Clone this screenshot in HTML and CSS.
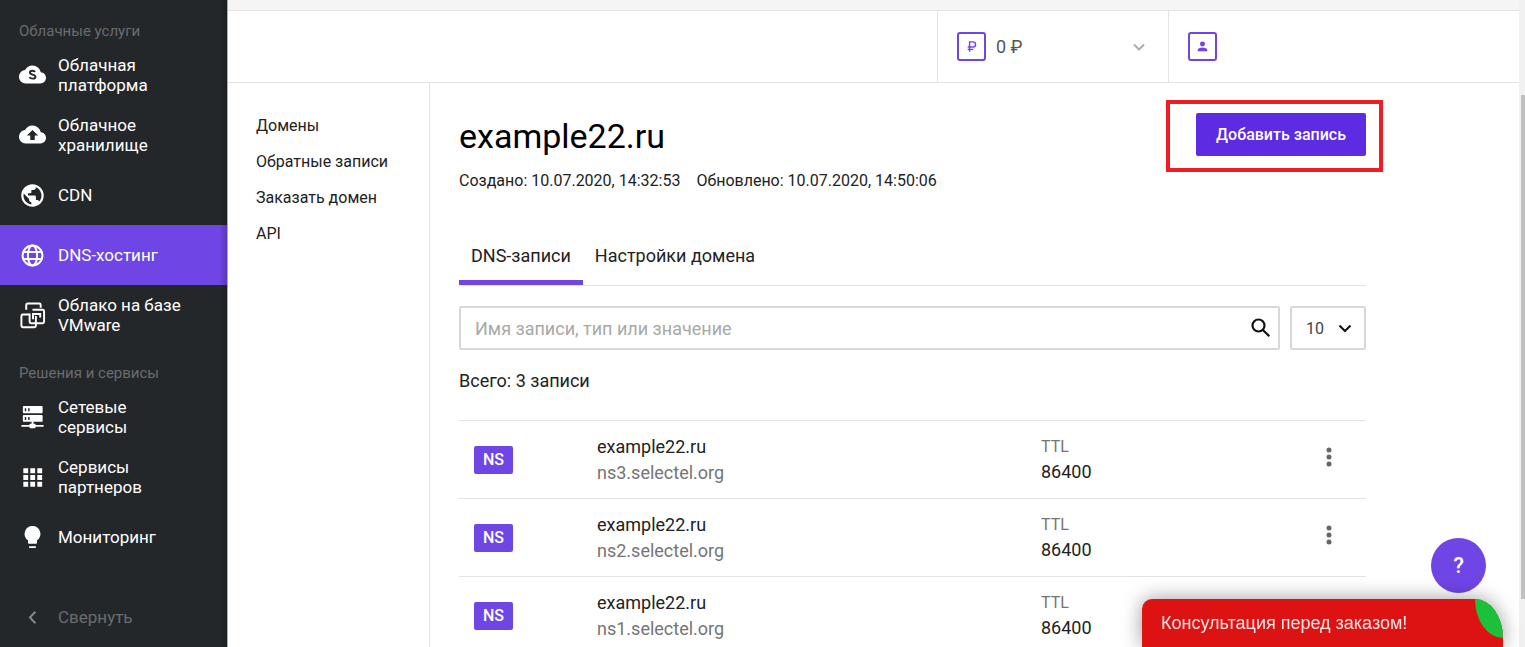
FILE: index.html
```html
<!DOCTYPE html>
<html lang="ru">
<head>
<meta charset="utf-8">
<title>example22.ru — DNS-хостинг</title>
<link rel="stylesheet" href="styles.css">
</head>
<body>
<div class="app">
  <nav class="sidebar" aria-label="Услуги">
    <h2 class="sidebar-title">Облачные услуги</h2>
    <a class="service" href="#">
      <svg class="service-icon" viewBox="0 1 24 24"><path fill="#fff" d="M19.350 10.040C18.670 6.590 15.640 4 12 4 9.110 4 6.600 5.640 5.350 8.040 2.340 8.360 0 10.910 0 14c0 3.310 2.690 6 6 6h13c2.760 0 5-2.240 5-5 0-2.640-2.050-4.780-4.650-4.960z"/><path fill="none" stroke="#24272a" stroke-width="1.700" d="M14.300 9.800c-.5-.7-1.300-1-2.300-1-1.400 0-2.300.7-2.300 1.600 0 2.400 4.900 1.200 4.900 3.700 0 1.100-1 1.700-2.500 1.700-1.300 0-2.300-.4-2.800-1.200"/></svg>
      <span>Облачная платформа</span>
    </a>
    <a class="service" href="#">
      <svg class="service-icon" viewBox="0 1 24 24"><path fill="#fff" d="M19.350 10.040C18.670 6.590 15.640 4 12 4 9.110 4 6.600 5.640 5.350 8.040 2.340 8.360 0 10.910 0 14c0 3.310 2.690 6 6 6h13c2.760 0 5-2.240 5-5 0-2.640-2.050-4.780-4.650-4.960z"/><path fill="#24272a" d="M14 13v4h-4v-4H7l5-5 5 5z"/></svg>
      <span>Облачное хранилище</span>
    </a>
    <a class="service" href="#">
      <svg class="service-icon" viewBox="0 0 24 24"><path fill="#fff" d="M12 2C6.480 2 2 6.480 2 12s4.480 10 10 10 10-4.480 10-10S17.520 2 12 2zm-1 17.930c-3.950-.49-7-3.850-7-7.930 0-.62.080-1.210.210-1.790L9 15v1c0 1.100.9 2 2 2v1.930zm6.900-2.540c-.26-.81-1-1.390-1.900-1.390h-1v-3c0-.55-.45-1-1-1H8v-2h2c.55 0 1-.45 1-1V7h2c1.100 0 2-.9 2-2v-.41c2.930 1.190 5 4.060 5 7.410 0 2.080-.8 3.970-2.100 5.390z"/></svg>
      <span>CDN</span>
    </a>
    <a class="service service-active" href="#" aria-current="page">
      <svg class="service-icon" viewBox="0 0 28 28"><g fill="none" stroke="#fff" stroke-width="2"><circle cx="14" cy="14" r="10.300"/><ellipse cx="14" cy="14" rx="4.800" ry="10.300"/><path d="M4.500 10.300h19M4.500 17.700h19"/></g></svg>
      <span>DNS-хостинг</span>
    </a>
    <a class="service" href="#">
      <svg class="service-icon" viewBox="0 0 28 28"><g fill="none" stroke="#fff" stroke-width="2"><path d="M7.500 8V3a1.500 1.500 0 0 1 1.500-1.500h12A1.500 1.500 0 0 1 22.500 3v3"/><path d="M11 13H4a1.500 1.500 0 0 0-1.500 1.500v10.200A1.500 1.500 0 0 0 4 26.200h12a1.500 1.500 0 0 0 1.500-1.500V14.500"/><path d="M11 12v8.500a1.500 1.500 0 0 0 1.500 1.500h12a1.500 1.500 0 0 0 1.500-1.500v-11A1.500 1.500 0 0 0 24.500 8H14M22 16v-3.500h-7.500V18"/></g></svg>
      <span>Облако на базе VMware</span>
    </a>

    <h2 class="sidebar-title">Решения и сервисы</h2>
    <a class="service" href="#">
      <svg class="service-icon" viewBox="0 0 28 28"><g fill="#fff"><rect x="4" y="2" width="20.500" height="7.500" rx="1"/><rect x="4" y="11.500" width="20.500" height="7" rx="1"/><path d="M13 18h2v2.500h1.500l1 1.200H25.500v2h-8l-1 1.500h-5l-1-1.500H2.500v-2h8l1-1.200H13z"/></g><path fill="#24272a" d="M6 4.500h1.500v3H6zM9.500 4.500H11v3H9.500zM6 13.500h1.500v3H6zM9.500 13.500H11v3H9.500z"/></svg>
      <span>Сетевые сервисы</span>
    </a>
    <a class="service" href="#">
      <svg class="service-icon" viewBox="0 0 28 28"><path fill="#fff" d="M4.500 4.500h5v5h-5zM11.700 4.500h5v5h-5zM19 4.500h5v5h-5zM4.500 11.500h5v5h-5zM11.700 11.500h5v5h-5zM19 11.500h5v5h-5zM4.500 18.500h5v5h-5zM11.700 18.500h5v5h-5zM19 18.500h5v5h-5z"/></svg>
      <span>Сервисы партнеров</span>
    </a>
    <a class="service" href="#">
      <svg class="service-icon" viewBox="0 0 28 28"><path fill="#fff" d="M14 2a8.200 8.200 0 0 0-4.700 14.900v2.500a1.200 1.200 0 0 0 1.200 1.200h7a1.200 1.200 0 0 0 1.200-1.200v-2.500A8.200 8.200 0 0 0 14 2zM10.500 23h7v1a1 1 0 0 1-1 1h-5a1 1 0 0 1-1-1z"/></svg>
      <span>Мониторинг</span>
    </a>
    <button class="service collapse" type="button">
      <svg class="service-icon" viewBox="0 0 28 28"><path fill="none" stroke="#85878a" stroke-width="2" d="M17 8L11.300 14l5.700 6"/></svg>
      <span>Свернуть</span>
    </button>
  </nav>

  <div class="page">
    <header class="topbar">
      <button class="balance" type="button">
        <span class="box-icon"><svg viewBox="0 0 24 24"><path fill="none" stroke="#7045e6" stroke-width="1.500" d="M10 17.500V7.200h3.500a2.700 2.700 0 0 1 0 5.400H8M8 15h6"/></svg></span>
        <span>0 ₽</span>
        <svg class="balance-arrow" viewBox="0 0 12 12"><path fill="none" stroke="#adadad" stroke-width="2" d="M1 3.500l5 5 5-5"/></svg>
      </button>
      <button class="account" type="button" aria-label="Профиль">
        <span class="box-icon"><svg viewBox="0 0 24 24"><g fill="#7045e6"><circle cx="12" cy="9.500" r="2.600"/><path d="M7 17v-1c0-2 2.200-3 5-3s5 1 5 3v1z"/></g></svg></span>
      </button>
    </header>

    <div class="body">
      <nav class="subnav" aria-label="DNS-хостинг">
        <a href="#">Домены</a>
        <a href="#">Обратные записи</a>
        <a href="#">Заказать домен</a>
        <a href="#">API</a>
      </nav>

      <main class="content">
        <div class="heading">
          <h1>example22.ru</h1>
          <div class="highlight"><button class="add" type="button">Добавить запись</button></div>
        </div>
        <p class="dates"><span>Создано: 10.07.2020, 14:32:53</span><span>Обновлено: 10.07.2020, 14:50:06</span></p>

        <div class="tabs">
          <a class="tab tab-active" href="#">DNS-записи</a>
          <a class="tab" href="#">Настройки домена</a>
        </div>

        <div class="filters">
          <label class="search">
            <input type="search" placeholder="Имя записи, тип или значение" aria-label="Поиск записей">
            <svg viewBox="0 0 24 24"><g fill="none" stroke="#111" stroke-width="2.200"><circle cx="9.500" cy="9.500" r="6"/><path d="M13.700 13.700l6.600 6.600"/></g></svg>
          </label>
          <div class="per-page">
            <select aria-label="Записей на странице"><option>10</option><option>25</option><option>50</option></select>
            <svg viewBox="0 0 14 14"><path fill="none" stroke="#111" stroke-width="2" d="M1.500 4.500L7 10l5.500-5.500"/></svg>
          </div>
        </div>

        <p class="total">Всего: 3 записи</p>

        <table class="records">
          <colgroup><col class="col-type"><col><col class="col-ttl"><col class="col-menu"></colgroup>
          <tbody>
            <tr>
              <td><span class="badge">NS</span></td>
              <td>example22.ru<div class="muted">ns3.selectel.org</div></td>
              <td><div class="ttl">TTL</div>86400</td>
              <td><button class="menu" type="button" aria-label="Действия"><svg viewBox="0 0 6 20"><g fill="#666"><circle cx="3" cy="3" r="2.500"/><circle cx="3" cy="10" r="2.500"/><circle cx="3" cy="17" r="2.500"/></g></svg></button></td>
            </tr>
            <tr>
              <td><span class="badge">NS</span></td>
              <td>example22.ru<div class="muted">ns2.selectel.org</div></td>
              <td><div class="ttl">TTL</div>86400</td>
              <td><button class="menu" type="button" aria-label="Действия"><svg viewBox="0 0 6 20"><g fill="#666"><circle cx="3" cy="3" r="2.500"/><circle cx="3" cy="10" r="2.500"/><circle cx="3" cy="17" r="2.500"/></g></svg></button></td>
            </tr>
            <tr>
              <td><span class="badge">NS</span></td>
              <td>example22.ru<div class="muted">ns1.selectel.org</div></td>
              <td><div class="ttl">TTL</div>86400</td>
              <td></td>
            </tr>
          </tbody>
        </table>
      </main>
    </div>
  </div>

  <div class="scroll-track" aria-hidden="true"><div class="scroll-thumb"></div></div>
</div>

<button class="help" type="button" aria-label="Помощь">?</button>
<button class="chat" type="button">Консультация перед заказом!<span class="leaf"></span></button>
</body>
</html>
```
FILE: styles.css
```css
* { box-sizing: border-box; }

body {
  margin: 0;
  font-family: Roboto, "Liberation Sans", sans-serif;
  font-size: 18px;
  color: #222;
  background: #fff;
}

a { color: inherit; text-decoration: none; }
button, input, select { font: inherit; color: inherit; }
button { border: 0; background: none; cursor: pointer; }
h1, h2, p { margin: 0; font-weight: 400; }
svg { display: block; }

.app {
  display: flex;
  height: 100vh;
  overflow: hidden;
}

/* Sidebar */
.sidebar {
  position: relative;
  display: flex;
  flex-direction: column;
  flex: none;
  width: 228px;
  padding-top: 3px;
  background: #24272a;
  color: #fff;
  border-right: 1px solid #aaa;
}
.sidebar::after {
  content: "";
  position: absolute;
  inset: 0 0 0 auto;
  width: 8px;
  background: linear-gradient(to right, transparent, rgba(0, 0, 0, .2));
}
.sidebar-title {
  padding: 14px 19px 0;
  font-size: 15px;
  line-height: 28px;
  color: #6a6c6e;
}
.service {
  display: flex;
  align-items: center;
  gap: 12px;
  flex: none;
  height: 60px;
  padding: 0 40px 0 19px;
  font-size: 17px;
  line-height: 20px;
  text-align: left;
}
.service-icon { flex: none; width: 27px; height: 27px; }
.service-active { background: #7045e6; }
.collapse { margin-top: 20px; color: #6a6c6e; }

/* Top bar */
.page {
  display: flex;
  flex-direction: column;
  flex: 1;
  min-width: 0;
  border-top: 10px solid #f5f5f5;
}
.topbar {
  display: flex;
  justify-content: flex-end;
  flex: none;
  height: 73px;
  border-top: 1px solid #e3e3e3;
  border-bottom: 1px solid #e3e3e3;
}
.balance, .account {
  display: flex;
  align-items: center;
  gap: 10px;
  padding: 0 19px;
  border-left: 1px solid #e3e3e3;
  color: #555;
}
.balance { width: 231px; }
.account { width: 351px; }
.box-icon {
  padding: 1px;
  border: 2px solid #7045e6;
  border-radius: 3px;
}
.box-icon svg { width: 23px; height: 23px; }
.balance-arrow { width: 12px; height: 12px; margin-left: auto; margin-right: 4px; }

/* Body */
.body { display: flex; flex: 1; min-height: 0; }
.subnav {
  display: flex;
  flex-direction: column;
  flex: none;
  width: 202px;
  padding: 25px 0 0 28px;
  border-right: 1px solid #e3e3e3;
  font-size: 16px;
  line-height: 36px;
}
.content {
  flex: 1;
  min-width: 0;
  padding: 30px 153px 0 29px;
  overflow: hidden;
}

.heading {
  display: flex;
  align-items: flex-start;
  justify-content: space-between;
}
.heading h1 { font-size: 34px; line-height: 46px; color: #000; }
.highlight { position: relative; }
.highlight::after {
  content: "";
  position: absolute;
  inset: -13px -17px -16px -30px;
  border: 4px solid #ee1c25;
  pointer-events: none;
}
.add {
  display: block;
  height: 43px;
  padding: 0 20px;
  border-radius: 2px;
  background: #5c2be2;
  color: #fff;
  font-size: 16px;
  font-weight: 500;
}
.dates {
  display: flex;
  gap: 16px;
  margin-top: 12px;
  font-size: 16px;
  line-height: 20px;
}

.tabs {
  display: flex;
  margin-top: 40px;
  border-bottom: 1px solid #e3e3e3;
}
.tab {
  padding: 13px 12px 12px;
  line-height: 24px;
  border-bottom: 5px solid transparent;
}
.tab-active { border-color: #7045e6; }

.filters { display: flex; gap: 10px; margin-top: 20px; }
.search {
  display: flex;
  align-items: center;
  flex: 1;
  height: 44px;
  padding: 0 5px 0 14px;
  border: 2px solid #d8d8d8;
  border-radius: 2px;
}
.search input {
  flex: 1;
  min-width: 0;
  padding: 0;
  border: 0;
  outline: 0;
  background: none;
}
.search input::placeholder { color: #a8a8a8; }
.search svg { width: 24px; height: 24px; }
.per-page {
  position: relative;
  width: 76px;
}
.per-page select {
  appearance: none;
  width: 100%;
  height: 44px;
  padding: 1px 14px 0;
  border: 2px solid #d8d8d8;
  border-radius: 2px;
  background: none;
  font-size: 16px;
  color: #444;
}
.per-page svg {
  position: absolute;
  top: 15px;
  right: 14px;
  width: 14px;
  height: 14px;
  pointer-events: none;
}

.total { margin-top: 19px; line-height: 24px; }

/* Records */
.records {
  width: 100%;
  margin-top: 27px;
  table-layout: fixed;
  border-collapse: collapse;
  line-height: 26px;
}
.records tr { height: 78px; border-top: 1px solid #e3e3e3; }
.records td { padding: 0; }
.col-type { width: 138px; }
.col-ttl { width: 251px; }
.col-menu { width: 74px; }
.badge {
  display: block;
  width: 39px;
  margin-left: 15px;
  border-radius: 2px;
  background: #7045e6;
  color: #fff;
  font-size: 16px;
  font-weight: 500;
  line-height: 28px;
  text-align: center;
}
.muted { color: #757575; }
.ttl { font-size: 16px; line-height: 24px; color: #757575; }
.menu { display: block; margin: 0 auto; padding: 0 8px 6px; }
.menu svg { width: 6px; height: 20px; }

/* Scroll indicator */
.scroll-track {
  flex: none;
  width: 6px;
  padding: 95px 0 48px 2px;
  background: #f1f1f1;
}
.scroll-thumb { height: 100%; background: #c1c1c1; }

/* Floating widgets */
.help {
  position: fixed;
  right: 39px;
  bottom: 54px;
  width: 55px;
  height: 55px;
  border-radius: 50%;
  background: #7045e6;
  color: #fff;
  font-size: 22px;
  font-weight: 500;
}
.chat {
  position: fixed;
  right: 22px;
  bottom: 0;
  width: 361px;
  height: 48px;
  padding: 0 19px;
  border-radius: 10px 28px 0 0 / 10px 39px 0 0;
  background: #dd1212;
  color: #f6e6e6;
  box-shadow: 0 0 20px rgba(0, 0, 0, .4);
  font-family: "Liberation Sans", Arial, sans-serif;
  font-size: 18px;
  text-align: left;
}
.leaf {
  position: absolute;
  top: 0;
  right: 0;
  width: 28px;
  height: 39px;
  border-radius: 0 100% 0 100%;
  background: #1bc138;
}
```
